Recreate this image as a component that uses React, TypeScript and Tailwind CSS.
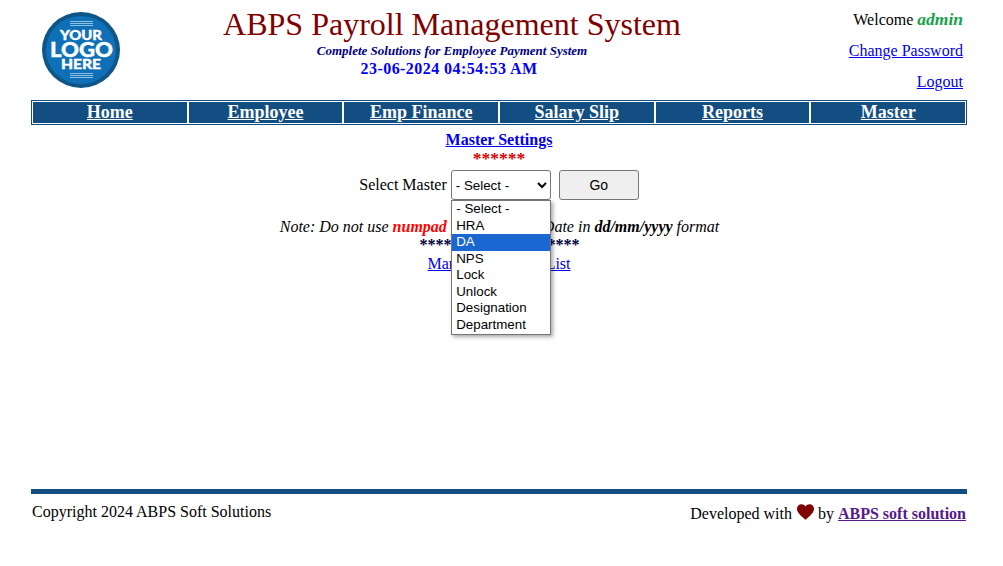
const menu = ["Home", "Employee", "Emp Finance", "Salary Slip", "Reports", "Master"];
const options = ["- Select -", "HRA", "DA", "NPS", "Lock", "Unlock", "Designation", "Department"];

function Logo() {
  return (
    <svg width="78" height="76" viewBox="0 0 78 76">
      <ellipse cx="39" cy="38" rx="39" ry="38" fill="#0f5688" />
      <ellipse cx="39" cy="38" rx="35" ry="34" fill="#0f70b7" />
      <g stroke="#8fbfe3" strokeWidth="1">
        <path d="M28 9.500h23M28 11.500h23M28 13.500h23M28 61.500h23M28 63.500h23M28 65.500h23" />
      </g>
      <g fill="#fff" stroke="#fff" strokeWidth="0.4" fontFamily="Lato, 'Open Sans', sans-serif" fontWeight="900" textAnchor="middle">
        <text x="39" y="28" fontSize="14" textLength="42" lengthAdjust="spacingAndGlyphs">YOUR</text>
        <text x="39.500" y="45" fontSize="21" textLength="63" lengthAdjust="spacingAndGlyphs">LOGO</text>
        <text x="39" y="57" fontSize="14" textLength="40" lengthAdjust="spacingAndGlyphs">HERE</text>
      </g>
    </svg>
  );
}

export default function App() {
  return (
    <div className="w-[936px] ml-[31px] min-h-[566px] bg-white text-black font-['Liberation_Serif',serif] text-[16px] leading-[18px]">
      <header className="flex h-[100px]">
        <div className="w-[110px] pl-[11px] pt-[12px]">
          <Logo />
        </div>
        <div className="w-[622px] flex flex-col items-center">
          <h1 className="text-[32px] leading-[37px] mt-[6px] text-[#800000] font-normal">ABPS Payroll Management System</h1>
          <p className="text-[13px] leading-[15px] font-bold italic text-[#000080]">Complete Solutions for Employee Payment System</p>
          <p className="text-[16px] leading-[19px] tracking-[0.45px] font-bold text-[#0000ff] mt-[1px] mr-[6px]">23-06-2024 04:54:53 AM</p>
        </div>
        <div className="flex-1 flex flex-col items-end pr-[4px] pt-[10px] gap-[13px]">
          <p className="leading-[18px]">
            Welcome <b className="italic text-[17.5px] leading-[18px] text-[#16a34a]">admin</b>
          </p>
          <a href="#" className="text-[#0000ee] underline">Change Password</a>
          <a href="#" className="text-[#0000ee] underline">Logout</a>
        </div>
      </header>

      <nav className="grid grid-cols-6 h-[25px] border border-[#134e83] bg-white p-px gap-[2px]">
        {menu.map((item) => (
          <a key={item} href="#" className="bg-[#134e83] text-white text-[18px] leading-[21px] font-bold underline text-center">
            {item}
          </a>
        ))}
      </nav>

      <main className="h-[364px] flex flex-col items-center">
        <a href="#" className="mt-[6px] font-bold text-[#0000ee] underline">Master Settings</a>
        <p className="font-bold text-[17.5px] text-[#d00000]">******</p>
        <div className="relative flex items-center mt-[3px] h-[30px]">
          <span className="mr-[4px]">Select Master</span>
          <select className="w-[100px] h-[30px] border border-[#767676] rounded-[3px] bg-white text-[13.33px] font-['Liberation_Sans',sans-serif]">
            <option>- Select -</option>
          </select>
          <button className="w-[80px] h-[30px] ml-[8px] border border-[#767676] rounded-[3px] bg-[#efefef] text-[14px] font-['Liberation_Sans',sans-serif]">
            Go
          </button>
          <ul className="absolute left-[92px] top-[30px] w-[100px] h-[135px] border border-[#767676] bg-white text-[13.33px] leading-[16.500px] font-['Liberation_Sans',sans-serif] shadow-[2px_2px_4px_rgba(0,0,0,0.35)] z-10">
            {options.map((option) => (
              <li key={option} className={option === "DA" ? "pl-[4px] bg-[#1a67d2] text-white" : "pl-[4px]"}>
                {option}
              </li>
            ))}
          </ul>
        </div>
        <p className="mt-[18px] pl-[1px] italic">
          Note: Do not use <b className="text-[#ff0000]">numpad</b> for entering a Date in <b>dd/mm/yyyy</b> format
        </p>
        <p className="font-bold text-[#000040] pl-[1px]">********************</p>
        <a href="#" className="text-[#0000ee] underline mt-[1px]">Managed Masters List</a>
      </main>

      <footer className="border-t-[5px] border-[#134e83] flex justify-between items-start px-px">
        <p className="mt-[9px]">Copyright 2024 ABPS Soft Solutions</p>
        <p className="mt-[11px] flex items-center">
          Developed with
          <svg className="ml-[5px] mr-[4px] mt-[-4px]" width="17" height="16" viewBox="0 0 24 22">
            <path d="M12 22C5 16 0 12 0 6.500 0 2.800 2.800 0 6.300 0 8.600 0 10.800 1.200 12 3.200 13.200 1.200 15.400 0 17.700 0 21.200 0 24 2.800 24 6.500 24 12 19 16 12 22z" fill="#800000" />
          </svg>
          by&nbsp;<a href="#" className="font-bold text-[#551a8b] underline">ABPS soft solution</a>
        </p>
      </footer>
    </div>
  );
}
